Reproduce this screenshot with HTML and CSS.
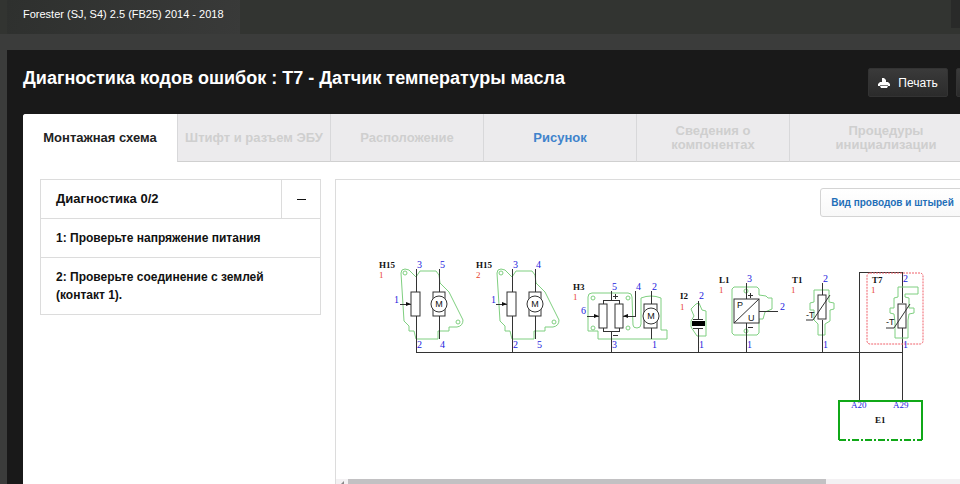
FILE: index.html
```html
<!DOCTYPE html>
<html lang="ru">
<head>
  <meta charset="UTF-8" />
  <title>Диагностика кодов ошибок</title>
  <link rel="stylesheet" href="styles.css">
</head>
<body>
  <div class="page">
    <header class="topbar">
      <span class="vehicle">Forester (SJ, S4) 2.5 (FB25) 2014 - 2018</span>
      <div class="topbar-end"></div>
    </header>

    <main class="panel">
      <div class="panel-header">
        <h1>Диагностика кодов ошибок : T7 - Датчик температуры масла</h1>
        <div class="actions">
          <button class="dark-button" type="button">
            <svg width="12" height="12" viewBox="0 0 12 12">
              <path d="M4 5V1H6L8 3V5z" fill="#fff"/>
              <path d="M2 5h8l2 2v2H0V7z" fill="#fff"/>
              <path d="M2 9h8l-1 2H3z" fill="#fff"/>
              <path d="M2 8.500h8" stroke="#777"/>
            </svg>
            Печать
          </button>
          <button class="dark-button more" type="button" aria-label="Ещё"></button>
        </div>
      </div>

      <nav class="tabs">
        <button class="tab active" type="button">Монтажная схема</button>
        <button class="tab" type="button" disabled>Штифт и разъем ЭБУ</button>
        <button class="tab" type="button" disabled>Расположение</button>
        <button class="tab link" type="button">Рисунок</button>
        <button class="tab" type="button" disabled>Сведения о компонентах</button>
        <button class="tab last" type="button" disabled>Процедуры инициализации</button>
      </nav>

      <div class="content">
        <aside class="steps">
          <div class="steps-header">
            <h2>Диагностика 0/2</h2>
            <button class="collapse" type="button" aria-label="Свернуть"></button>
          </div>
          <p>1: Проверьте напряжение питания</p>
          <p>2: Проверьте соединение с землей (контакт 1).</p>
        </aside>

        <section class="diagram">
          <div class="diagram-toolbar">
            <button class="light-button" type="button">Вид проводов и штырей</button>
          </div>

          <svg class="scheme" width="624" height="240" viewBox="336 230 624 240">
            <defs>
              <marker id="arrow" viewBox="0 0 5 4" refX="5" refY="2" markerWidth="5" markerHeight="4" markerUnits="userSpaceOnUse" orient="auto">
                <path d="M0 0L5 2L0 4z" fill="#111"/>
              </marker>
              <g id="throttle">
                <path class="outline" d="M401 273Q401 269 405 269L409 270L416 277L420 271H436L439 275L440 283L449 292L463 320Q463 326 457 327H449V331H438V339H416L414 331H409V326L404 321Z"/>
                <circle class="outline" cx="405" cy="273" r="2"/>
                <circle class="outline" cx="458" cy="322" r="2"/>
                <path class="wire" d="M416 269V292M416 316V352M439 269V292M439 316V339"/>
                <rect class="part" x="411" y="292" width="9" height="24"/>
                <rect class="part" x="433" y="292" width="12" height="24"/>
                <circle class="part" cx="439" cy="304" r="8"/>
                <text class="mark" x="439" y="307" text-anchor="middle">M</text>
                <path class="wire" d="M400 304H411" marker-end="url(#arrow)"/>
              </g>
            </defs>

            <!-- common wire -->
            <path class="wire" d="M416 352H902M859 400V272H902V303M902 328V400"/>

            <!-- H15 -->
            <use href="#throttle"/>
            <use href="#throttle" x="96"/>

            <!-- H3 -->
            <path class="outline" d="M588 331V297Q588 293 592 293H628Q632 293 632 297L633 325Q633 328 637 328Q641 328 641 324V298Q651 294 661 298V330H667V339H598V331Z"/>
            <circle class="outline" cx="593" cy="298" r="2"/>
            <circle class="outline" cx="628" cy="298" r="2"/>
            <circle class="outline" cx="593" cy="328" r="2"/>
            <circle class="outline" cx="628" cy="328" r="2"/>
            <path class="wire" d="M611 291V300M603 304V300H619V304M603 328V331H619V328M611 331V352M651 291V304M651 328V339"/>
            <rect class="part" x="599" y="304" width="8" height="24"/>
            <rect class="part" x="615" y="304" width="8" height="24"/>
            <rect class="part" x="644" y="304" width="13" height="24"/>
            <circle class="part" cx="651" cy="316" r="8"/>
            <text class="mark" x="651" y="319" text-anchor="middle">M</text>
            <path class="wire" d="M587 316H599" marker-end="url(#arrow)"/>
            <path class="wire" d="M635 291V316H623" marker-end="url(#arrow)"/>
            <path class="wire" d="M613 296H618M615 294V299M613 335H618"/>

            <!-- I2 -->
            <path class="outline" d="M696 304L691 309L694 316L691 321V327L697 336H706V311L702 310L699 303Z"/>
            <path class="wire" d="M698 301V319M693 319H703M693 328H703M698 328V352"/>
            <rect x="692" y="321" width="13" height="5" fill="#000"/>

            <!-- L1 -->
            <path class="outline" d="M734 287H757L759 289V295L766 296L768 298H772V309L765 312L763 319H759V333L757 335H734L732 333V289Z"/>
            <circle class="outline" cx="746" cy="291" r="2"/>
            <circle class="outline" cx="746" cy="331" r="2"/>
            <path class="wire" d="M746 283V299M746 323V352M759 311H778"/>
            <rect class="part" x="734" y="299" width="25" height="24"/>
            <path class="wire diagonal" d="M734 323L759 299"/>
            <text class="mark" x="737" y="308">P</text>
            <text class="mark" x="748" y="321">U</text>
            <path class="wire" d="M748 295H753M750 293V298M748 327H753"/>

            <!-- T1 -->
            <path class="outline" d="M814 290H829V302L834 303V309L830 310V321L825 324V335H818V324L814 320V310H810V303L814 302Z"/>
            <path class="wire" d="M822 283V295M822 320V352"/>
            <rect class="part" x="818" y="295" width="8" height="24"/>
            <path class="wire diagonal" d="M830 295L813 320H806"/>
            <text class="mark" x="806" y="318">-T</text>

            <!-- T7 -->
            <rect class="selection" x="867" y="273" width="56" height="71" rx="3"/>
            <path class="outline" d="M898 287H918V294H905V297L909 298V308H914V313L909 314L908 320V338H895V322L894 314L890 313V308H894V298L898 297Z"/>
            <rect class="part" x="898" y="304" width="8" height="24"/>
            <path class="wire diagonal" d="M910 304L894 328H886"/>
            <text class="mark" x="886" y="325">-T</text>

            <!-- E1 -->
            <path class="unit" d="M839 440V401H922V440"/>
            <path class="unit dashed" d="M839 440H922"/>

            <g class="name">
              <text x="379" y="268">H15</text>
              <text x="476" y="268">H15</text>
              <text x="573" y="290">H3</text>
              <text x="680" y="299">I2</text>
              <text x="719" y="283">L1</text>
              <text x="792" y="283">T1</text>
              <text x="872" y="283">T7</text>
              <text x="875" y="423">E1</text>
            </g>
            <g class="index">
              <text x="379" y="278">1</text>
              <text x="476" y="278">2</text>
              <text x="573" y="300">1</text>
              <text x="680" y="310">1</text>
              <text x="719" y="293">1</text>
              <text x="791" y="293">1</text>
              <text x="871" y="293">1</text>
            </g>
            <g class="pin">
              <text x="417" y="268">3</text>
              <text x="440" y="268">5</text>
              <text x="394" y="303">1</text>
              <text x="417" y="348">2</text>
              <text x="440" y="348">4</text>
              <text x="513" y="268">3</text>
              <text x="536" y="268">4</text>
              <text x="491" y="303">1</text>
              <text x="513" y="348">2</text>
              <text x="537" y="348">5</text>
              <text x="612" y="290">5</text>
              <text x="636" y="290">4</text>
              <text x="652" y="290">2</text>
              <text x="581" y="314">6</text>
              <text x="612" y="348">3</text>
              <text x="652" y="348">1</text>
              <text x="699" y="299">2</text>
              <text x="699" y="348">1</text>
              <text x="747" y="282">3</text>
              <text x="780" y="310">2</text>
              <text x="747" y="348">1</text>
              <text x="823" y="282">2</text>
              <text x="823" y="348">1</text>
              <text x="903" y="282">2</text>
              <text x="903" y="348">1</text>
              <text class="small" x="851" y="408">A20</text>
              <text class="small" x="893" y="408">A29</text>
            </g>
          </svg>

          <div class="scrollbar">
            <span class="scroll-arrow"></span>
            <div class="scroll-thumb"></div>
          </div>
        </section>
      </div>
    </main>
  </div>
</body>
</html>
```
FILE: styles.css
```css
* {
  box-sizing: border-box;
}

body {
  margin: 0;
  height: 100vh;
  overflow: hidden;
  background: #3b3c3b;
  font-family: "Liberation Sans", Arial, sans-serif;
  color: #111;
}

button {
  font-family: inherit;
  margin: 0;
}

/* runs a little past the right edge of the window */
.page {
  width: calc(100% + 22px);
}

.topbar {
  display: flex;
  justify-content: space-between;
  height: 34px;
  padding-left: 7px;
  background: #323431;
}

.vehicle {
  padding: 0 16px;
  line-height: 29px;
  font-size: 11px;
  color: #fff;
  background: linear-gradient(110deg, #2e302e, #393a39);
}

.topbar-end {
  width: 31px;
  height: 28px;
  background: #292a29;
}

.panel {
  margin: 16px 0 0 7px;
  padding-left: 16px;
  background: #191919;
}

.panel-header {
  display: flex;
  justify-content: space-between;
  height: 64px;
}

h1 {
  margin: 0;
  padding-top: 16px;
  font-size: 18px;
  line-height: 24px;
  color: #fff;
}

.actions {
  display: flex;
  gap: 8px;
  padding-top: 18px;
}

.dark-button {
  display: flex;
  align-items: center;
  justify-content: center;
  gap: 8px;
  width: 80px;
  height: 29px;
  padding: 0;
  border: 1px solid #333;
  border-radius: 2px;
  background: linear-gradient(#3a3a3a, #2b2b2b);
  color: #fff;
  font-size: 12px;
}

.dark-button.more {
  width: 26px;
}

.tabs {
  display: flex;
  height: 48px;
  border-radius: 3px 0 0 0;
  overflow: hidden;
  background: #fff;
}

.tab {
  width: 153px;
  padding: 0 24px;
  border: 0;
  border-left: 1px solid #d8d8da;
  border-bottom: 1px solid #d0d0d0;
  background: #ecebed;
  color: #cfcfcf;
  font-size: 13px;
  font-weight: bold;
  line-height: 14px;
}

.tab:nth-child(2) {
  padding: 0;
}

.tab.active {
  width: 154px;
  padding: 0;
  border: 0;
  background: #fff;
  color: #222;
}

.tab.link {
  color: #3f83cc;
}

.tab.last {
  flex: 1;
}

.content {
  display: flex;
  align-items: flex-start;
  gap: 14px;
  min-height: calc(100vh - 162px);
  padding: 17px 0 0 17px;
  background: #fff;
}

.steps {
  width: 281px;
  border: 1px solid #dcdcdc;
}

.steps-header {
  display: flex;
  height: 38px;
}

h2 {
  flex: 1;
  margin: 0;
  padding-left: 15px;
  font-size: 13px;
  line-height: 37px;
}

.collapse {
  display: flex;
  align-items: center;
  justify-content: center;
  width: 39px;
  padding: 0;
  border: 0;
  border-left: 1px solid #dcdcdc;
  background: #fff;
}

.collapse::before {
  content: "";
  width: 9px;
  height: 1px;
  background: #111;
}

.steps p {
  margin: 0;
  padding: 10px 15px;
  border-top: 1px solid #dcdcdc;
  font-size: 12px;
  font-weight: bold;
  line-height: 18px;
}

.diagram {
  flex: 1;
  min-width: 0;
  border: 1px solid #dcdcdc;
  overflow: hidden;
}

.diagram-toolbar {
  display: flex;
  justify-content: flex-end;
  height: 50px;
  padding: 8px 16px 0 0;
}

.light-button {
  width: 145px;
  height: 29px;
  padding: 0;
  border: 1px solid #d4d4d4;
  border-radius: 3px;
  background: linear-gradient(#fff, #f8f8f8);
  color: #1f6fb8;
  font-size: 10px;
  font-weight: bold;
}

.scheme {
  display: block;
  margin-bottom: 9px;
}

.outline {
  fill: none;
  stroke: #7fcf80;
}

.wire {
  fill: none;
  stroke: #333;
  shape-rendering: crispEdges;
}

.diagonal {
  shape-rendering: auto;
}

.part {
  fill: #fff;
  stroke: #333;
}

.mark {
  font-size: 9px;
  fill: #111;
}

.selection {
  fill: none;
  stroke: #f0606a;
  stroke-dasharray: 2 1;
}

.unit {
  fill: none;
  stroke: #10a818;
  stroke-width: 2;
}

.unit.dashed {
  stroke-dasharray: 7 2 2 2;
}

.name,
.index,
.pin {
  font-family: "Liberation Serif", "Times New Roman", serif;
  font-size: 9px;
}

.name {
  font-weight: bold;
  fill: #111;
}

.index {
  fill: #e8422c;
}

.pin {
  font-size: 10px;
  fill: #2222dd;
}

.pin .small {
  font-size: 9px;
}

.scrollbar {
  display: flex;
  height: 16px;
  background: #f3f1f3;
}

.scroll-arrow {
  width: 12px;
}

.scroll-arrow::before {
  content: "";
  display: block;
  margin: 2px 0 0 4px;
  width: 0;
  border: 4px solid transparent;
  border-left: 0;
  border-right-color: #888;
}

.scroll-thumb {
  width: 478px;
  background: #c2c1c3;
}
```
